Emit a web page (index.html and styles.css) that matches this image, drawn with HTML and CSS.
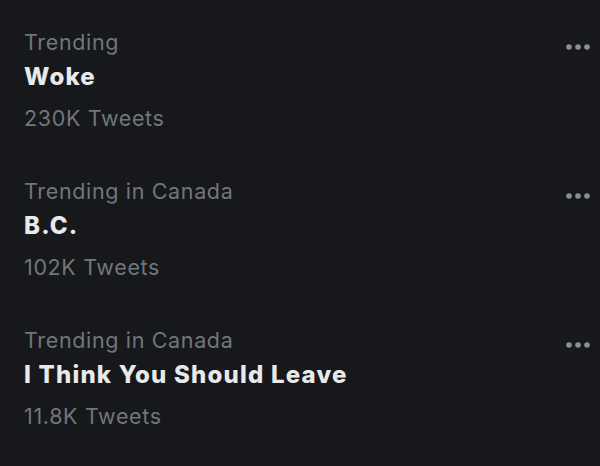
FILE: index.html
```html
<!DOCTYPE html>
<html lang="en">
<head>
<meta charset="utf-8">
<title>Trends</title>
<link rel="stylesheet" href="styles.css">
</head>
<body>
<ul class="trends">
  <li class="trend">
    <div class="trend-text">
      <div class="trend-context">Trending</div>
      <div class="trend-name">Woke</div>
      <div class="trend-count">230K Tweets</div>
    </div>
    <button class="more" aria-label="More">
      <svg width="26" height="8" viewBox="0 0 26 8"><circle cx="4" cy="4" r="2.8"/><circle cx="13" cy="4" r="2.8"/><circle cx="22" cy="4" r="2.8"/></svg>
    </button>
  </li>
  <li class="trend">
    <div class="trend-text">
      <div class="trend-context">Trending in Canada</div>
      <div class="trend-name">B.C.</div>
      <div class="trend-count">102K Tweets</div>
    </div>
    <button class="more" aria-label="More">
      <svg width="26" height="8" viewBox="0 0 26 8"><circle cx="4" cy="4" r="2.8"/><circle cx="13" cy="4" r="2.8"/><circle cx="22" cy="4" r="2.8"/></svg>
    </button>
  </li>
  <li class="trend">
    <div class="trend-text">
      <div class="trend-context">Trending in Canada</div>
      <div class="trend-name">I Think You Should Leave</div>
      <div class="trend-count">11.8K Tweets</div>
    </div>
    <button class="more" aria-label="More">
      <svg width="26" height="8" viewBox="0 0 26 8"><circle cx="4" cy="4" r="2.8"/><circle cx="13" cy="4" r="2.8"/><circle cx="22" cy="4" r="2.8"/></svg>
    </button>
  </li>
</ul>
</body>
</html>
```
FILE: styles.css
```css
html, body {
  margin: 0;
  padding: 0;
  background: #16181c;
  height: 100%;
}

body {
  font-family: Inter, "Noto Sans", sans-serif;
  color: #e7e9ea;
  overflow: hidden;
}

.trends {
  list-style: none;
  margin: 0;
  padding: 0;
}

.trend {
  display: flex;
  justify-content: space-between;
  align-items: flex-start;
  padding: 27px 9px 16px 24px;
  height: 106px;
}

.trend-context,
.trend-count {
  font-size: 21.5px;
  line-height: 30px;
  letter-spacing: 0.65px;
  color: #71767b;
}

.trend-name {
  margin-top: 2px;
  font-size: 24px;
  line-height: 36px;
  font-weight: 800;
  letter-spacing: 1.2px;
  color: #e7e9ea;
}

.trend-count {
  margin-top: 8px;
}

.more {
  border: 0;
  background: none;
  padding: 0;
  margin-top: 16px;
  fill: #8b8f94;
  line-height: 0;
}
```
